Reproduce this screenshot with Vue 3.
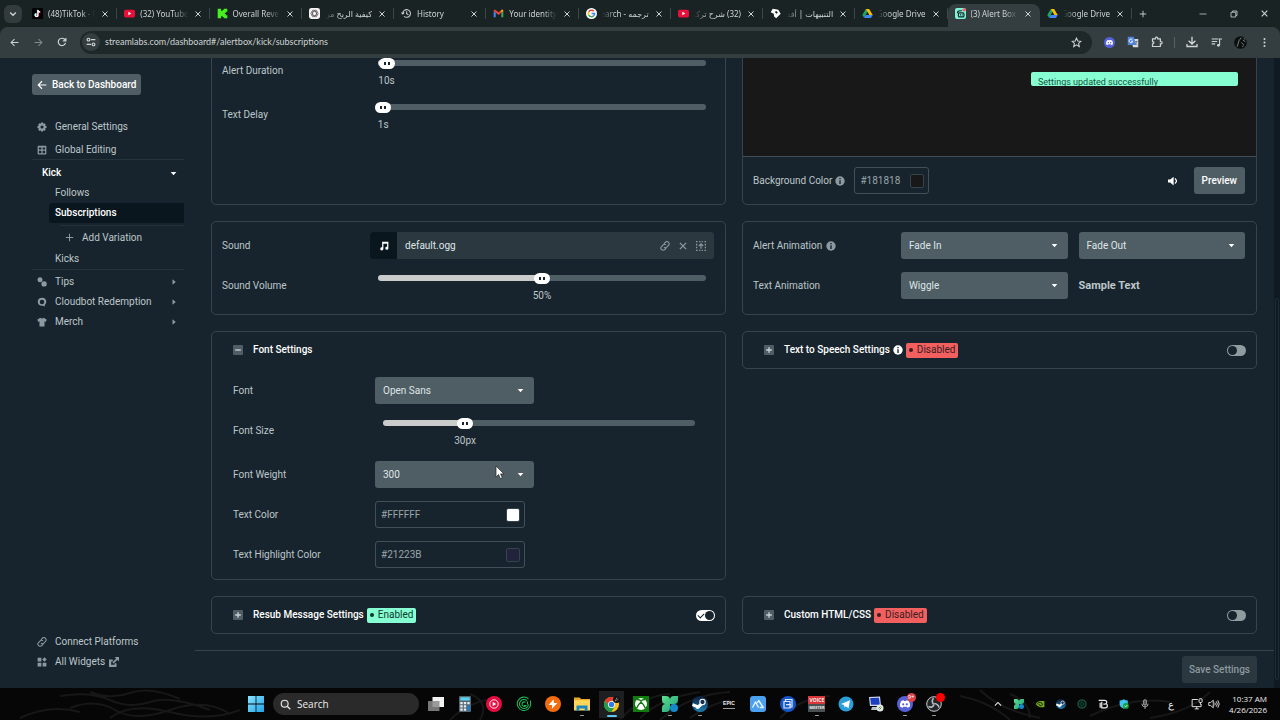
<script setup>
import { ref } from 'vue'

const tabs = [
  { title: '(48)TikTok - M', icon: 'tiktok' },
  { title: '(32) YouTube', icon: 'youtube' },
  { title: 'Overall Reve', icon: 'kick' },
  { title: 'كيفية الربح من', icon: 'chatgpt', rtl: true },
  { title: 'History', icon: 'history' },
  { title: 'Your identity', icon: 'gmail' },
  { title: 'ترجمه - Search', icon: 'google', rtl: true },
  { title: '(32) شرح تركي', icon: 'youtube', rtl: true },
  { title: 'التنبيهات | أفد', icon: 'cube', rtl: true },
  { title: 'Google Drive', icon: 'drive', rtl: true },
  { title: '(3) Alert Box', icon: 'alertbox', active: true },
  { title: 'Google Drive', icon: 'drive', rtl: true },
]

const duration = ref(26)
const delay = ref(16)
const volume = ref(500)
const fontSize = ref(263)
const fillTo = (v) => ({ '--at': v / 1000 })

const bgColor = ref('#181818')
const textColor = ref('#FFFFFF')
const highlight = ref('#21223B')

const apps = [
  { icon: 'taskview', name: 'Task View' },
  { icon: 'calc', name: 'Calculator' },
  { icon: 'ytmusic', name: 'YouTube Music' },
  { icon: 'spiral', name: 'Radar' },
  { icon: 'bolt', name: 'Bolt' },
  { icon: 'folder', name: 'File Explorer', open: true },
  { icon: 'chrome', name: 'Chrome', current: true },
  { icon: 'xbox', name: 'Xbox' },
  { icon: 'clover', name: 'Streamer', open: true },
  { icon: 'steam', name: 'Steam', open: true },
  { icon: 'epic', name: 'Epic Games' },
  { icon: 'peaks', name: 'Peaks' },
  { icon: 'bluecam', name: 'Capture' },
  { icon: 'voice', name: 'Voicemeeter', open: true },
  { icon: 'telegram', name: 'Telegram' },
  { icon: 'remote', name: 'Remote Desktop' },
  { icon: 'discord', name: 'Discord', open: true, badge: '9+' },
  { icon: 'obs', name: 'OBS Studio', open: true, dot: true },
]
const tray = ['chevup', 'clover', 'nvidia', 'steam', 'ring', 'tb', 'shield', 'mic']
</script>

<template>
  <div class="screen">
    <svg class="defs" width="0" height="0" aria-hidden="true">
      <defs>
        <linearGradient id="gWin" x1="0" y1="0" x2="1" y2="1"><stop offset="0" stop-color="#8ae4ff" /><stop offset="1" stop-color="#1fa4e8" /></linearGradient>
        <linearGradient id="gClover" x1="0" y1="0" x2="1" y2="1"><stop offset="0" stop-color="#5fe08a" /><stop offset="1" stop-color="#1c9c84" /></linearGradient>
        <linearGradient id="gSteam" x1="0" y1="0" x2="0" y2="1"><stop offset="0" stop-color="#0d1b38" /><stop offset="1" stop-color="#1d7fb5" /></linearGradient>
      </defs>
      <symbol id="tiktok" viewBox="0 0 16 16"><rect width="16" height="16" rx="2" fill="#000" /><path d="M8.6 3v7.4a1.9 1.9 0 1 1-1.9-1.9M8.6 3c.2 1.8 1.4 2.8 3.2 3" fill="none" stroke="#25f4ee" stroke-width="1.8" transform="translate(-.6 -.4)" /><path d="M8.6 3v7.4a1.9 1.9 0 1 1-1.9-1.9M8.6 3c.2 1.8 1.4 2.8 3.2 3" fill="none" stroke="#fe2c55" stroke-width="1.8" transform="translate(.5 .4)" /><path d="M8.6 3v7.4a1.9 1.9 0 1 1-1.9-1.9M8.6 3c.2 1.8 1.4 2.8 3.2 3" fill="none" stroke="#fff" stroke-width="1.7" /></symbol>
      <symbol id="youtube" viewBox="0 0 16 16"><rect y="2.4" width="16" height="11.4" rx="2.6" fill="#e8103a" /><path d="M6.3 5.6v5l4.4-2.5z" fill="#fff" /></symbol>
      <symbol id="kick" viewBox="0 0 16 16"><path d="M1 1h5v3.400h2V2.500h2V1h5v4.500h-1.800v1.500h-1.700v2h1.700v1.500H15V15h-5v-1.500H8v-2H6V15H1z" fill="#45f01c" /></symbol>
      <symbol id="chatgpt" viewBox="0 0 16 16"><rect width="16" height="16" rx="3.5" fill="#f4f4f4" /><g fill="none" stroke="#555" stroke-width="1"><ellipse cx="8" cy="8" rx="5.4" ry="2.9" /><ellipse cx="8" cy="8" rx="5.4" ry="2.9" transform="rotate(60 8 8)" /><ellipse cx="8" cy="8" rx="5.4" ry="2.9" transform="rotate(120 8 8)" /></g></symbol>
      <symbol id="history" viewBox="0 0 16 16"><path d="M2.6 8A5.6 5.6 0 1 1 4.3 12M.6 6.6l2 2 2-2M8.2 4.8v3.6l2.6 1.5" fill="none" stroke="#c6cdcd" stroke-width="1.5" /></symbol>
      <symbol id="gmail" viewBox="0 0 16 16"><path d="M1 13.5v-9l3 2.2v6.8z" fill="#4285f4" /><path d="M12 13.5V6.7l3-2.2v9z" fill="#34a853" /><path d="M1 4.5C1 2.6 2.8 2 4.200 3.100L8 6l3.800-2.900C13.200 2 15 2.600 15 4.500L8 10z" fill="#ea4335" /><path d="M12 3l1-.6q2-.2 2 2.100l-3 2.200z" fill="#fbbc04" /></symbol>
      <symbol id="google" viewBox="0 0 16 16"><circle cx="8" cy="8" r="8" fill="#fff" /><g fill="none" stroke-width="2.200"><path d="M11.300 4.800A4.600 4.600 0 0 0 4 5.700" stroke="#ea4335" /><path d="M4 5.700a4.600 4.600 0 0 0 0 4.600" stroke="#fbbc04" /><path d="M4 10.300a4.600 4.600 0 0 0 7 1.200" stroke="#34a853" /><path d="M11 11.500A4.600 4.600 0 0 0 12.600 8.100H8" stroke="#4285f4" /></g></symbol>
      <symbol id="cube" viewBox="0 0 16 16"><path d="M4 1l8 1.500 3.500 6L9 15l-3-2.500-.5-4L1 6z" fill="#fff" /><path d="M7 5.500l2.500-1 2 2.500-2.500 1.500z" fill="#1a2425" /></symbol>
      <symbol id="drive" viewBox="0 0 16 16"><path d="M5.600 1.500h4.800L5.400 10.200 3 14.200.4 10.300z" fill="#1fa463" /><path d="M5.600 1.500h4.800l5.200 8.800h-5z" fill="#fbbc04" /><path d="M5.200 10.300h10.400L13 14.500H3z" fill="#4285f4" /><path d="M8 6.200l2.300 4H5.700z" fill="#1a2425" /></symbol>
      <symbol id="alertbox" viewBox="0 0 16 16"><rect width="16" height="16" rx="3" fill="#80f5d2" /><path d="M3.500 7.500q0-3.500 3.500-3.500h3M5 8.500q0-1.500 1.500-1.500h5q1.500 0 1.500 1.500v3q0 1.500-1.500 1.500h-5Q5 13 5 11.500z" fill="none" stroke="#123" stroke-width="1.700" /><path d="M8 9v2M10.500 9v2" stroke="#123" stroke-width="1.300" /><circle cx="13.300" cy="2.700" r="2.500" fill="#f5576b" /></symbol>
      <symbol id="x" viewBox="0 0 16 16"><path d="M3 3l10 10M13 3L3 13" fill="none" stroke="currentColor" stroke-width="2" /></symbol>
      <symbol id="chev" viewBox="0 0 16 16"><path d="M3.500 5.500L8 10l4.500-4.500" fill="none" stroke="currentColor" stroke-width="2.200" /></symbol>
      <symbol id="chevup" viewBox="0 0 16 16"><path d="M3 10.500L8 5.500l5 5" fill="none" stroke="#e8e8e8" stroke-width="1.700" /></symbol>
      <symbol id="back" viewBox="0 0 16 16"><path d="M15 8H2M8 2L2 8l6 6" fill="none" stroke="currentColor" stroke-width="1.800" /></symbol>
      <symbol id="forward" viewBox="0 0 16 16"><path d="M1 8h13M8 2l6 6-6 6" fill="none" stroke="currentColor" stroke-width="1.800" /></symbol>
      <symbol id="reload" viewBox="0 0 16 16"><path d="M13.600 9.500A5.900 5.900 0 1 1 12.400 4L14 6M14.200 1.500v4.800H9.400" fill="none" stroke="currentColor" stroke-width="1.900" /></symbol>
      <symbol id="tune" viewBox="0 0 16 16"><g fill="none" stroke="currentColor" stroke-width="1.900"><circle cx="4" cy="4.200" r="2.200" /><path d="M8 4.200h7M1 11.800h7" /><circle cx="12" cy="11.800" r="2.200" /></g></symbol>
      <symbol id="star" viewBox="0 0 16 16"><path d="M8 1.600l1.900 4.300 4.600.4-3.500 3.100 1.100 4.600L8 11.500 3.900 14 5 9.400 1.500 6.300l4.600-.4z" fill="none" stroke="currentColor" stroke-width="1.500" /></symbol>
      <symbol id="discord" viewBox="0 0 16 16"><circle cx="8" cy="8" r="8" fill="#5661d8" /><path d="M4.200 5.100Q5.500 4.200 6.600 4.200l.4.700h2l.4-.700q1.100 0 2.400.9 1.400 2.400 1.200 5.400-1.200 1.100-2.700 1.200l-.6-1H6.300l-.6 1Q4.200 11.600 3 10.500q-.2-3 1.200-5.400z" fill="#fff" /><circle cx="6.200" cy="8.300" r="1.100" fill="#5661d8" /><circle cx="9.800" cy="8.300" r="1.100" fill="#5661d8" /></symbol>
      <symbol id="translate" viewBox="0 0 16 16"><path d="M6 4h9v11H8z" fill="#d8dcdc" /><path d="M1 1h8l3 11H1z" fill="#4f86dc" /><path d="M7.300 5.200A2.400 2.400 0 1 0 7.600 7H5.600" fill="none" stroke="#fff" stroke-width="1.200" /><path d="M10.500 7.500h4M12.500 6.500v1q0 2.500-2 4M11 9q1 2 3 3" fill="none" stroke="#667" /></symbol>
      <symbol id="puzzle" viewBox="0 0 16 16"><path d="M2 3.800h3.800q-.3-2.300 1.600-2.300T9 3.800h3.500v3.600q2.300-.3 2.300 1.500t-2.300 1.500V14H2v-3.600q1.800 0 1.800-1.500T2 7.400z" fill="none" stroke="currentColor" stroke-width="1.600" /></symbol>
      <symbol id="download" viewBox="0 0 16 16"><path d="M8 1v9.500M3.500 6.300L8 10.800l4.500-4.500M1.300 10.500V14h13.400v-3.500" fill="none" stroke="currentColor" stroke-width="1.800" /></symbol>
      <symbol id="queue" viewBox="0 0 16 16"><path d="M1 3h10M1 6.500h8M1 10h5M12.500 12V3H16" fill="none" stroke="currentColor" stroke-width="1.600" /><circle cx="10.800" cy="12" r="2" fill="currentColor" /></symbol>
      <symbol id="avatar" viewBox="0 0 16 16"><circle cx="8" cy="8" r="7.800" fill="#0c1010" /><path d="M4 13l2-7 3-4M12 3l2 1M11 5l3 2M9 8l3 3M10 13l2-1" fill="none" stroke="#8e9695" stroke-width="1" /></symbol>
      <symbol id="dots" viewBox="0 0 16 16"><circle cx="8" cy="2.800" r="1.500" fill="currentColor" /><circle cx="8" cy="8" r="1.500" fill="currentColor" /><circle cx="8" cy="13.200" r="1.500" fill="currentColor" /></symbol>
      <symbol id="plus" viewBox="0 0 16 16"><path d="M8 1.500v13M1.500 8h13" fill="none" stroke="currentColor" stroke-width="1.800" /></symbol>
      <symbol id="minimise" viewBox="0 0 16 16"><path d="M1 8h14" stroke="currentColor" stroke-width="1.500" /></symbol>
      <symbol id="restore" viewBox="0 0 16 16"><path d="M2 4.500h9.500V14H2zM5 4V2h9v9h-2" fill="none" stroke="currentColor" stroke-width="1.600" stroke-linejoin="round" /></symbol>
      <symbol id="gear" viewBox="0 0 16 16"><path d="M6.500.8h3l.5 2.100 1.800-1.100 2.100 2.100L12.900 5.800l2.300.7v3l-2.300.6 1 2-2.100 2.100-1.900-1-.4 2h-3l-.6-2-2 1-2-2.100 1-2-2.100-.6v-3l2.100-.6-1-2L4 1.800l1.900 1zM8 5.500a2.500 2.500 0 1 0 0 5 2.500 2.500 0 0 0 0-5z" fill="currentColor" fill-rule="evenodd" /></symbol>
      <symbol id="window" viewBox="0 0 16 16"><path d="M2.500 1h11Q15 1 15 2.500v11q0 1.500-1.500 1.500h-11Q1 15 1 13.500v-11Q1 1 2.500 1zM3 4v3h4V4zM9 4v3h4V4zM3 9v4h4V9zM9 9v4h4V9z" fill="currentColor" fill-rule="evenodd" /></symbol>
      <symbol id="caret" viewBox="0 0 16 16"><path d="M3 5.500h10L8 11z" fill="currentColor" /></symbol>
      <symbol id="tri" viewBox="0 0 16 16"><path d="M5 2.500v11L11.500 8z" fill="currentColor" /></symbol>
      <symbol id="coins" viewBox="0 0 16 16"><circle cx="4.800" cy="4.500" r="4" fill="currentColor" /><circle cx="11.300" cy="11" r="4.300" fill="currentColor" /></symbol>
      <symbol id="bot" viewBox="0 0 16 16"><path d="M8 1.200c4 0 6.800 2.500 6.800 6.200 0 2.200-1 3.800-2.300 4.900v2.900l-3-1.200c-5 .600-8.300-2.300-8.300-6.600 0-3.700 2.800-6.200 6.800-6.200zM8 4.300a3.600 3.600 0 1 0 0 7.200 3.600 3.600 0 0 0 0-7.200z" fill="currentColor" fill-rule="evenodd" /></symbol>
      <symbol id="shirt" viewBox="0 0 16 16"><path d="M5 1q3 2.400 6 0l4.600 3.300-1.800 3.500-1.800-.9V15H4V6.900l-1.800.9L.4 4.300z" fill="currentColor" /></symbol>
      <symbol id="link" viewBox="0 0 16 16"><path d="M6.200 4.400l2.300-2.300a3.400 3.400 0 0 1 5 5l-2.600 2.600a3.200 3.200 0 0 1-4.500 0M9.800 11.600l-2.300 2.300a3.400 3.400 0 0 1-5-5l2.600-2.600a3.200 3.200 0 0 1 4.500 0" fill="none" stroke="currentColor" stroke-width="1.700" /></symbol>
      <symbol id="widgets" viewBox="0 0 16 16"><path d="M1 1h6v6H1zM1 9h6v6H1zM9 9h6v6H9zM12 .5L15.500 4 12 7.500 8.500 4z" fill="currentColor" /></symbol>
      <symbol id="external" viewBox="0 0 16 16"><path d="M9 0h7v7l-2.500-2.500L7.500 10.500 5.500 8.500l6-6zM0 4h6v3H3.500v5.500H9V10h3v6H0z" fill="currentColor" /></symbol>
      <symbol id="music" viewBox="0 0 16 16"><path d="M5 1h10v10.500a2.500 2.500 0 1 1-2-2.400V4.500H7v8a2.500 2.500 0 1 1-2-2.400z" fill="currentColor" /></symbol>
      <symbol id="picker" viewBox="0 0 16 16"><path d="M0 1h2.500M5 1h2M9 1h2M13.500 1H16M0 15h2.500M5 15h2M9 15h2M13.500 15H16M1 4.500v2.500M1 9v2.500M15 4.500v2.500M15 9v2.500" fill="none" stroke="currentColor" stroke-width="2" /><path d="M8 12.500V4M4.500 8L8 4.500 11.500 8" fill="none" stroke="currentColor" stroke-width="1.800" /></symbol>
      <symbol id="info" viewBox="0 0 16 16"><circle cx="8" cy="8" r="7.500" fill="currentColor" /><path d="M8 3.200v2M8 6.800v6" stroke="#17242d" stroke-width="2.200" /></symbol>
      <symbol id="speaker" viewBox="0 0 16 16"><path d="M0 5.500h3.500L9 1v14L3.500 10.500H0z" fill="currentColor" /><path d="M11 4q5 4 0 8" fill="none" stroke="currentColor" stroke-width="2" /></symbol>
      <symbol id="plusbox" viewBox="0 0 16 16"><rect width="16" height="16" rx="1.500" fill="#4f5e65" /><path d="M8 3.500v9M3.500 8h9" stroke="#c8d0d3" stroke-width="2.200" /></symbol>
      <symbol id="minusbox" viewBox="0 0 16 16"><rect width="16" height="16" rx="1.500" fill="#4f5e65" /><path d="M3.500 8h9" stroke="#c8d0d3" stroke-width="2.200" /></symbol>
      <symbol id="windows" viewBox="0 0 16 16"><path d="M0 0h7.600v7.600H0zM8.400 0H16v7.600H8.400zM0 8.400h7.600V16H0zM8.400 8.400H16V16H8.400z" fill="url(#gWin)" /></symbol>
      <symbol id="search" viewBox="0 0 16 16"><circle cx="6.800" cy="6.800" r="5" fill="#3a3a3a" stroke="#e6e6e6" stroke-width="1.700" /><path d="M10.500 10.500L15 15" stroke="#e6e6e6" stroke-width="1.900" /></symbol>
      <symbol id="taskview" viewBox="0 0 16 16"><rect x="4.500" y="1" width="11.500" height="10" fill="#f1f1f1" /><rect y="5" width="11.500" height="10" fill="#8b8b8b" opacity=".85" /></symbol>
      <symbol id="calc" viewBox="0 0 16 16"><rect x="2" width="12" height="16" rx="1" fill="#55646e" /><rect x="3.300" y="1.300" width="9.400" height="3.200" fill="#59d4ee" /><path d="M3.300 6h2.400v2.200H3.300zM6.800 6h2.400v2.200H6.800zM10.300 6h2.400v2.200h-2.400zM3.300 9.300h2.400v2.200H3.300zM6.800 9.300h2.400v2.200H6.800zM3.300 12.500h2.400v2.200H3.300zM6.800 12.500h2.400v2.200H6.800z" fill="#e5edf0" /><path d="M10.300 9.300h2.400v5.400h-2.400z" fill="#1a7fd0" /></symbol>
      <symbol id="ytmusic" viewBox="0 0 16 16"><circle cx="8" cy="8" r="8" fill="#e60c3f" /><circle cx="8" cy="8" r="4.200" fill="none" stroke="#fff" stroke-width=".9" /><path d="M6.700 5.800v4.400L10.300 8z" fill="#fff" /></symbol>
      <symbol id="spiral" viewBox="0 0 16 16"><g fill="none" stroke="#25b955" stroke-width="1.100"><path d="M12.500 2.800A6.700 6.700 0 1 0 14.700 8M14.300 4.500l.4 3.500M11 4.600A4.500 4.500 0 1 0 12.500 8.500M9.500 6.300A2.200 2.200 0 1 0 10 9.500H8M11.500 5.500v3" /></g></symbol>
      <symbol id="bolt" viewBox="0 0 16 16"><circle cx="8" cy="8" r="8" fill="#f36d10" /><path d="M8.700 3.200L3.600 9h3.600l-.3 3.700L12.400 7H8.800z" fill="#fff" /></symbol>
      <symbol id="folder" viewBox="0 0 16 16"><path d="M0 1.500h5.500L7.200 3H16v11.500H0z" fill="#e7a82b" /><path d="M0 4.200h16v10H0z" fill="#ffd65a" /><path d="M2.500 9.500h11V15h-2.800v-2.400H5.300V15H2.500z" fill="#1787c4" /></symbol>
      <symbol id="chrome" viewBox="0 0 16 16"><circle cx="7.500" cy="8.500" r="7.500" fill="#fbc116" /><path d="M1 4.750a7.500 7.500 0 0 1 13 0H7.500L5 10z" fill="#e33b2e" /><path d="M1 4.750a7.500 7.500 0 0 0 6.500 11.250l3.200-5.600L5 10z" fill="#229a4b" /><circle cx="7.500" cy="8.500" r="3.500" fill="#fff" /><circle cx="7.500" cy="8.500" r="2.700" fill="#2b7de9" /><circle cx="12.500" cy="3.500" r="3.500" fill="#111" /><path d="M11 5.500l2-4M12.500 4.500l2-1.500" stroke="#999" stroke-width=".8" /></symbol>
      <symbol id="xbox" viewBox="0 0 16 16"><rect width="16" height="16" fill="#107c10" /><circle cx="8" cy="8" r="6" fill="#fff" /><path d="M3.800 3.700Q6 3 8 5q2-2 4.200-1.300M3.500 12.400Q5 8.500 8 6q3 2.500 4.500 6.400" fill="none" stroke="#107c10" stroke-width="1.500" /></symbol>
      <symbol id="clover" viewBox="0 0 16 16"><path d="M0 0h4q4 0 4 4 0-4 4-4h4v4q0 4-4 4 1 0 1 1l-5-1v4q0 4-4 4H0v-4q0-4 4-4-4 0-4-4z" fill="url(#gClover)" /><circle cx="12" cy="12" r="4" fill="#1788c8" /></symbol>
      <symbol id="nvidia" viewBox="0 0 16 16"><path d="M1 8q3-5 8-5h6v10H8Q4 12.500 1 8z" fill="#76a91b" /><path d="M3.500 8q2-3 5-2.500T12 9q-2 2.500-4 1.500T6.500 8" fill="none" stroke="#10190a" stroke-width="1.500" /></symbol>
      <symbol id="steam" viewBox="0 0 16 16"><circle cx="8" cy="8" r="8" fill="url(#gSteam)" /><path d="M.5 8.500l5 2.200M6 11l3.500-3" stroke="#fff" stroke-width="3" /><circle cx="10.500" cy="6" r="2.700" fill="#1b2d4c" stroke="#fff" stroke-width="1.100" /><circle cx="5.700" cy="11" r="2" fill="#fff" /></symbol>
      <symbol id="peaks" viewBox="0 0 16 16"><rect width="16" height="16" rx="3" fill="#4ba0ef" /><path d="M2.500 11.500L5.500 6l3 5.500M7.200 7l1.500-2.500 4.500 7h-3.500" fill="none" stroke="#e8f4ff" stroke-width="1.400" stroke-linejoin="round" /></symbol>
      <symbol id="bluecam" viewBox="0 0 16 16"><circle cx="8" cy="8" r="8" fill="#1557c6" /><path d="M5.500 5V3.500H12V11h-1.500M4 5.500h6v6.500H4zM6 8.700h5" fill="none" stroke="#dceaff" stroke-width="1.200" /></symbol>
      <symbol id="telegram" viewBox="0 0 16 16"><circle cx="8" cy="8" r="7.500" fill="#2ba0d8" /><path d="M3 8l9-3.700-1.500 8-2.700-2L6.500 11.500 6 9z" fill="#fff" /></symbol>
      <symbol id="remote" viewBox="0 0 16 16"><path d="M1 1l11-.5 1 9.500H2z" fill="#d5dcec" /><path d="M2.200 2l8.800-.300.800 7H3z" fill="#1c3fc0" /><path d="M4 11h6l1 3H3z" fill="#b9c0c8" /><circle cx="12" cy="12" r="3.500" fill="#e7e9e7" /><path d="M10.500 12.500l2-2M11.500 13.500l2-2" stroke="#4b9a3f" /></symbol>
      <symbol id="obs" viewBox="0 0 16 16"><circle cx="8" cy="8" r="7.300" fill="#23262a" stroke="#c9ced1" stroke-width="1" /><path d="M7.500 8.200Q5 5 7.500 2.200M8.200 7.500q4 .500 4.800 4M8 8.500q-1.500 4-5.500 2" fill="none" stroke="#b9bec1" stroke-width="1.600" /></symbol>
      <symbol id="ring" viewBox="0 0 16 16"><circle cx="8" cy="8" r="6.500" fill="#0a1d17" stroke="#1d6b4d" stroke-width="1.600" /><circle cx="8" cy="8" r="3" fill="none" stroke="#15503b" /></symbol>
      <symbol id="tb" viewBox="0 0 16 16"><path d="M1 2h9.500q3.500 0 3.500 3 0 2-1.500 2.600 2.500.6 2.500 3 0 3.400-4 3.400H6V4.500M8.500 8H12M3.500 6v8" fill="none" stroke="#e9e9e9" stroke-width="2" /></symbol>
      <symbol id="shield" viewBox="0 0 16 16"><path d="M1 2.500Q5 2.500 7.500.5 10 2.500 14 2.500V8q0 5-6.500 7.500Q1 13 1 8z" fill="#3dc5f1" /><circle cx="11" cy="11" r="4.700" fill="#169c3c" /><path d="M8.800 11l1.700 1.600 3-3" fill="none" stroke="#fff" stroke-width="1.400" /></symbol>
      <symbol id="mic" viewBox="0 0 16 16"><rect x="5.500" y="1" width="5" height="9" rx="2.500" fill="#53585a" stroke="#d8d8d8" /><path d="M3 7.500q0 5 5 5t5-5M8 12.500V16" fill="none" stroke="#d8d8d8" stroke-width="1.200" /></symbol>
      <symbol id="monitor" viewBox="0 0 16 16"><path d="M9 2H1.500v9.500h12V8M5 14.500h5.500M7.700 11.500v3M12.500 6v3" fill="none" stroke="#e4e4e4" stroke-width="1.300" /><rect x="10.800" y="1" width="4" height="5" rx="1" fill="none" stroke="#e4e4e4" stroke-width="1.300" /></symbol>
      <symbol id="sound" viewBox="0 0 16 16"><path d="M1 6h2.500L7 3v10l-3.500-3H1zM9 6q1.500 2 0 4M11 4.500q3 3.500 0 7M13 3q4 5 0 10" fill="none" stroke="#e4e4e4" stroke-width="1.200" /></symbol>
    </svg>

    <header class="chrome">
      <div class="strip">
        <button class="tabmenu" aria-label="Search tabs"><svg class="s10"><use href="#chev" /></svg></button>
        <div class="tabs">
          <div v-for="(t, i) in tabs" :key="i" class="tab" :class="{ active: t.active }">
            <svg class="s11"><use :href="'#' + t.icon" /></svg>
            <span class="title" :class="{ rtl: t.rtl }">{{ t.title }}</span>
            <button aria-label="Close tab"><svg class="s8"><use href="#x" /></svg></button>
          </div>
        </div>
        <button class="newtab" aria-label="New tab"><svg class="s8"><use href="#plus" /></svg></button>
        <div class="winctl">
          <button aria-label="Minimise"><svg class="s8"><use href="#minimise" /></svg></button>
          <button aria-label="Restore"><svg class="s8"><use href="#restore" /></svg></button>
          <button aria-label="Close"><svg class="s9"><use href="#x" /></svg></button>
        </div>
      </div>
      <div class="toolbar">
        <div class="nav">
          <button aria-label="Back"><svg class="s9"><use href="#back" /></svg></button>
          <button class="off" aria-label="Forward"><svg class="s9"><use href="#forward" /></svg></button>
          <button aria-label="Reload"><svg class="s10"><use href="#reload" /></svg></button>
        </div>
        <div class="omni">
          <button class="site" aria-label="Site information"><svg class="s10"><use href="#tune" /></svg></button>
          <input type="text" aria-label="Address" value="streamlabs.com/dashboard#/alertbox/kick/subscriptions" />
          <button aria-label="Bookmark"><svg class="s11"><use href="#star" /></svg></button>
        </div>
        <div class="exts">
          <button aria-label="Discord"><svg class="s11"><use href="#discord" /></svg></button>
          <button aria-label="Translate"><svg class="s12"><use href="#translate" /></svg></button>
          <button aria-label="Extensions"><svg class="s12"><use href="#puzzle" /></svg></button>
          <i></i>
          <button aria-label="Downloads"><svg class="s12"><use href="#download" /></svg></button>
          <button aria-label="Media"><svg class="s11"><use href="#queue" /></svg></button>
          <button aria-label="Profile"><svg class="s13"><use href="#avatar" /></svg></button>
          <button aria-label="Menu"><svg class="s11"><use href="#dots" /></svg></button>
        </div>
      </div>
    </header>

    <div class="page">
      <aside class="side">
        <a class="backbtn" href="#"><svg class="s10"><use href="#back" /></svg>Back to Dashboard</a>
        <nav>
          <a class="item tall" href="#"><svg class="s10"><use href="#gear" /></svg>General Settings</a>
          <a class="item tall" href="#"><svg class="s10"><use href="#window" /></svg>Global Editing</a>
          <div class="group">
            <a class="item kick" href="#">Kick<svg class="s9 end"><use href="#caret" /></svg></a>
            <a class="item sub" href="#">Follows</a>
            <a class="item sub on" href="#">Subscriptions</a>
            <a class="item add" href="#"><svg class="s9"><use href="#plus" /></svg>Add Variation</a>
            <a class="item sub" href="#">Kicks</a>
          </div>
          <a class="item" href="#"><svg class="s10"><use href="#coins" /></svg>Tips<svg class="s8 end"><use href="#tri" /></svg></a>
          <a class="item" href="#"><svg class="s10"><use href="#bot" /></svg>Cloudbot Redemption<svg class="s8 end"><use href="#tri" /></svg></a>
          <a class="item" href="#"><svg class="s10"><use href="#shirt" /></svg>Merch<svg class="s8 end"><use href="#tri" /></svg></a>
        </nav>
        <nav class="bottom">
          <a class="item" href="#"><svg class="s10"><use href="#link" /></svg>Connect Platforms</a>
          <a class="item" href="#"><svg class="s10"><use href="#widgets" /></svg>All Widgets<svg class="s10 ext"><use href="#external" /></svg></a>
        </nav>
      </aside>

      <main>
        <div class="scroll">
          <div class="cards">
            <section class="card first">
              <div class="row slide">
                <label for="dur">Alert Duration</label>
                <div class="slider" :style="fillTo(duration)">
                  <span class="rail"></span><input id="dur" v-model="duration" type="range" max="1000" />
                  <output>10s</output>
                </div>
              </div>
              <div class="row slide">
                <label for="delay">Text Delay</label>
                <div class="slider" :style="fillTo(delay)">
                  <span class="rail"></span><input id="delay" v-model="delay" type="range" max="1000" />
                  <output>1s</output>
                </div>
              </div>
            </section>

            <section class="card first preview">
              <div class="stage"></div>
              <div class="bar">
                <label for="bg">Background Color</label>
                <svg class="s10 dim"><use href="#info" /></svg>
                <div class="color small">
                  <input id="bg" v-model="bgColor" type="text" />
                  <input v-model="bgColor" type="color" aria-label="Pick background color" />
                </div>
                <button class="mute" aria-label="Sound"><svg class="s10"><use href="#speaker" /></svg></button>
                <button class="btn">Preview</button>
              </div>
            </section>

            <section class="card">
              <div class="row">
                <span>Sound</span>
                <div class="file">
                  <span class="note"><svg class="s10"><use href="#music" /></svg></span>
                  <span class="name">default.ogg</span>
                  <button aria-label="Link"><svg class="s10"><use href="#link" /></svg></button>
                  <button aria-label="Remove"><svg class="s10"><use href="#x" /></svg></button>
                  <button aria-label="Choose media"><svg class="s10"><use href="#picker" /></svg></button>
                </div>
              </div>
              <div class="row slide">
                <label for="vol">Sound Volume</label>
                <div class="slider" :style="fillTo(volume)">
                  <span class="rail"></span><input id="vol" v-model="volume" type="range" max="1000" />
                  <output>50%</output>
                </div>
              </div>
            </section>

            <section class="card stretch">
              <div class="row three">
                <label for="anim">Alert Animation<svg class="s10 dim"><use href="#info" /></svg></label>
                <div class="select"><select id="anim"><option>Fade In</option></select><svg class="s9"><use href="#caret" /></svg></div>
                <div class="select"><select aria-label="Exit animation"><option>Fade Out</option></select><svg class="s9"><use href="#caret" /></svg></div>
              </div>
              <div class="row three">
                <label for="tanim">Text Animation</label>
                <div class="select"><select id="tanim"><option>Wiggle</option></select><svg class="s9"><use href="#caret" /></svg></div>
                <strong class="sample">Sample Text</strong>
              </div>
            </section>

            <section class="card fold">
              <h2><button aria-label="Collapse"><svg class="s10"><use href="#minusbox" /></svg></button>Font Settings</h2>
              <div class="fields">
                <div class="row">
                  <label for="font">Font</label>
                  <div class="select narrow"><select id="font"><option>Open Sans</option></select><svg class="s9"><use href="#caret" /></svg></div>
                </div>
                <div class="row slide">
                  <label for="size">Font Size</label>
                  <div class="slider" :style="fillTo(fontSize)">
                    <span class="rail"></span><input id="size" v-model="fontSize" type="range" max="1000" />
                    <output>30px</output>
                  </div>
                </div>
                <div class="row">
                  <label for="weight">Font Weight</label>
                  <div class="select narrow"><select id="weight"><option>300</option></select><svg class="s9"><use href="#caret" /></svg></div>
                </div>
                <div class="row">
                  <label for="tc">Text Color</label>
                  <div class="color"><input id="tc" v-model="textColor" type="text" /><input v-model="textColor" type="color" aria-label="Pick text color" /></div>
                </div>
                <div class="row">
                  <label for="hc">Text Highlight Color</label>
                  <div class="color"><input id="hc" v-model="highlight" type="text" /><input v-model="highlight" type="color" aria-label="Pick highlight color" /></div>
                </div>
              </div>
            </section>

            <section class="card fold">
              <h2>
                <button aria-label="Expand"><svg class="s10"><use href="#plusbox" /></svg></button>Text to Speech Settings
                <svg class="s10 info"><use href="#info" /></svg><span class="badge bad">Disabled</span>
                <input type="checkbox" aria-label="Text to Speech" />
              </h2>
            </section>

            <section class="card fold">
              <h2>
                <button aria-label="Expand"><svg class="s10"><use href="#plusbox" /></svg></button>Resub Message Settings
                <span class="badge">Enabled</span>
                <input type="checkbox" aria-label="Resub Message" checked />
              </h2>
            </section>

            <section class="card fold">
              <h2>
                <button aria-label="Expand"><svg class="s10"><use href="#plusbox" /></svg></button>Custom HTML/CSS
                <span class="badge bad">Disabled</span>
                <input type="checkbox" aria-label="Custom HTML/CSS" />
              </h2>
            </section>
          </div>
          <div class="toast">Settings updated successfully</div>
        </div>
        <footer><button class="btn save">Save Settings</button></footer>
      </main>
      <div class="vbar"><span></span></div>
    </div>

    <div class="taskbar">
      <svg class="waves" viewBox="0 0 1280 32" preserveAspectRatio="none" aria-hidden="true">
        <g fill="none" stroke="#888" stroke-width="2" opacity=".13">
          <path d="M60 8q30-5 50 4t40 2 60 8M70 20q25-10 45 2t55 0 60 4M20 30q30-14 60-6M90 4q20 8 40 1t50 6M110 30q20-16 60-6t70-2" />
          <path d="M450 32q20-20 50-22M470 6q20 8 10 26M620 32q20-24 50-26M640 30q20-20 60-26M660 32q30-26 70-28M690 30q20-14 40-18M780 30q20-20 50-22" />
          <path d="M960 8q30 6 50 24M980 2q20 20 60 28M1010 6q20 8 20 24M1090 28q40-20 80-14M1150 30q40-6 60-26" />
        </g>
      </svg>
      <button class="start" aria-label="Start"><svg class="s16"><use href="#windows" /></svg></button>
      <button class="find"><svg class="s11"><use href="#search" /></svg>Search</button>
      <div class="apps">
        <button v-for="a in apps" :key="a.name" :class="{ open: a.open, current: a.current }" :aria-label="a.name">
          <span v-if="a.icon === 'voice'" class="voice"><b>VOICE</b><b>MEETER</b></span>
          <span v-else-if="a.icon === 'epic'" class="epic">EPIC</span>
          <svg v-else class="s16"><use :href="'#' + a.icon" /></svg>
          <em v-if="a.badge">{{ a.badge }}</em>
          <em v-if="a.dot" class="dot"></em>
        </button>
      </div>
      <div class="tray">
        <svg v-for="t in tray" :key="t" class="s10"><use :href="'#' + t" /></svg>
      </div>
      <span class="lang">ع</span>
      <svg class="s12"><use href="#monitor" /></svg>
      <svg class="s12"><use href="#sound" /></svg>
      <div class="clock"><span>10:37 AM</span><span>4/26/2026</span></div>
    </div>

    <svg class="pointer" viewBox="0 0 10 15"><path d="M1 1v11l2.600-2.400 1.700 4 2-.900-1.700-3.800H9z" fill="#fff" stroke="#222" stroke-width=".7" /></svg>
  </div>
</template>

<style>
html, body { background: #000; overflow: hidden; }
</style>

<style scoped>
.screen { position: relative; display: flex; flex-direction: column; height: 100vh; font-family: Roboto, "Liberation Sans", sans-serif; font-size: 10px; line-height: 12px; color: #bdc6ca; }
.screen *, .screen *::before { box-sizing: border-box; }
.defs { position: absolute; }
svg { flex: none; display: block; }
.s8 { width: 8px; height: 8px; }
.s9 { width: 9px; height: 9px; }
.s10 { width: 10px; height: 10px; }
.s11 { width: 11px; height: 11px; }
.s12 { width: 12px; height: 12px; }
.s13 { width: 13px; height: 13px; }
.s16 { width: 16px; height: 16px; }
button { border: 0; padding: 0; margin: 0; background: none; color: inherit; font: inherit; display: flex; align-items: center; justify-content: center; flex: none; }
a { color: inherit; text-decoration: none; }
input, select { font: inherit; color: inherit; margin: 0; }

/* browser frame */
.chrome { background: #192324; font-family: "Noto Sans", "Open Sans", "DejaVu Sans", sans-serif; color: #cdd4d4; flex: none; }
.strip { display: flex; height: 27px; align-items: stretch; padding-left: 4px; }
.tabmenu { width: 18px; height: 18px; border-radius: 6px; background: #323c3e; align-self: center; margin-right: 3px; }
.tabs { flex: 1; display: flex; min-width: 0; }
.tab { flex: 1 1 0; min-width: 0; display: flex; align-items: center; padding: 0 8px 0 7px; position: relative; font-size: 8px; }
.tab::before { content: ""; position: absolute; right: 0; top: 8px; height: 11px; width: 1px; background: #3a4648; }
.tab.active { background: #343e40; border-radius: 8px 8px 0 0; margin-top: 4px; padding-bottom: 4px; }
.tab.active::before { display: none; }
.title { flex: 1; min-width: 0; margin: 0 6px 0 5px; overflow: hidden; white-space: nowrap; -webkit-mask: linear-gradient(to left, transparent, #000 14px); mask: linear-gradient(to left, transparent, #000 14px); }
.title.rtl { direction: rtl; -webkit-mask: linear-gradient(to right, transparent, #000 14px); mask: linear-gradient(to right, transparent, #000 14px); }
.newtab { width: 22px; }
.winctl { display: flex; padding-left: 33px; }
.winctl button { width: 31px; }
.toolbar { display: flex; align-items: center; height: 31px; background: #343e40; border-radius: 8px 8px 0 0; padding-bottom: 1px; }
.nav { display: flex; padding: 0 5px 0 2px; }
.nav button { width: 24px; }
.off { opacity: .5; }
.omni { flex: 1; display: flex; align-items: center; height: 23px; border-radius: 12px; background: #1e2829; padding: 0 10px 0 2px; margin-left: 1px; }
.site { width: 18px; height: 18px; border-radius: 50%; background: #343e40; }
.omni input { flex: 1; border: 0; background: none; outline: 0; padding: 0 5px; font-family: Lato, "Open Sans", sans-serif; font-size: 9px; }
.exts { display: flex; align-items: center; padding: 0 4px 0 5px; }
.exts button { width: 24px; }
.exts i { width: 1px; height: 11px; background: #566062; margin: 0 5px; }

/* page */
.page { flex: 1; min-height: 0; display: flex; background: #17242d; overflow: hidden; }
.side { width: 195px; flex: none; padding: 16px 11px 16px 32px; display: flex; flex-direction: column; }
.backbtn { align-self: flex-start; display: flex; align-items: center; gap: 5px; height: 21px; padding: 0 5px; border-radius: 3px; background: #4f5e65; color: #fff; font-weight: 500; margin-bottom: 20px; }
.item { display: flex; align-items: center; height: 20px; gap: 8px; padding-left: 5px; }
.item > svg { color: #8d999f; }
.item.tall { height: 23px; }
.item .end { margin-left: auto; margin-right: 6px; }
.group { border: solid #25333b; border-width: 1px 0; padding: 3px 0 0; margin: -2px 0 2px; }
.kick { color: #fff; font-weight: 500; padding-left: 10px; }
.item.kick > svg { color: #fff; }
.sub { padding-left: 6px; margin-left: 17px; border-radius: 3px 0 0 3px; }
.on { background: #09161d; color: #fff; font-weight: 500; }
.add { margin: 2px 0 0 28px; border-top: 1px solid #22303a; height: 24px; }
.bottom { margin-top: auto; }
.item .ext { margin-left: -4px; }

main { flex: 1; min-width: 0; display: flex; flex-direction: column; }
.scroll { flex: 1; min-height: 0; position: relative; overflow: hidden; padding: 0 17px 0 16px; }
.cards { display: grid; grid-template-columns: 1fr 1fr; gap: 16px; align-items: start; margin-top: -20px; }
.card { border: 1px solid #36454d; border-radius: 5px; padding: 10px 11px 6px 10px; min-height: 38px; }
.first { min-height: 167px; align-self: stretch; }
.stretch { align-self: stretch; }
.row { display: grid; grid-template-columns: 148px 1fr; align-items: center; min-height: 27px; margin-bottom: 13px; }
.row:last-child { margin-bottom: 0; }
.row:has(+ .slide) { margin-bottom: 5px; }
.row.slide { min-height: 44px; margin-bottom: 8px; }
.first .row.slide, .row.slide:last-child { margin-bottom: 0; }
.three { grid-template-columns: 137px 1fr 1fr; column-gap: 11px; }
.row label, .row > span { display: flex; align-items: center; gap: 4px; }
.dim { color: #8d999f; }

.slider { align-self: start; display: grid; grid-template-rows: 12px 12px; row-gap: 6px; padding-top: 8px; }
.rail { grid-area: 1 / 1; align-self: center; height: 6px; margin: 0 8px; border-radius: 3px; background: linear-gradient(to right, #c9cccb calc(var(--at) * 100%), #4f5e65 calc(var(--at) * 100%)); }
.slider input { grid-area: 1 / 1; width: 100%; height: 12px; appearance: none; background: none; }
.slider input::-webkit-slider-thumb { appearance: none; width: 16px; height: 11px; border-radius: 6px; background: linear-gradient(#17242d, #17242d) 5px 50% / 2px 3px no-repeat, linear-gradient(#17242d, #17242d) 9px 50% / 2px 3px no-repeat, #fff; }
.slider output { width: 40px; text-align: center; margin-left: calc((100% - 16px) * var(--at) - 12px); }

.select { display: grid; align-items: center; }
.select.narrow { width: 159px; }
.select select { grid-area: 1 / 1; appearance: none; width: 100%; height: 27px; border: 0; border-radius: 3px; background: #4f5e65; padding: 0 8px; color: #dfe5e7; }
.select svg { grid-area: 1 / 1; justify-self: end; margin-right: 9px; color: #fff; pointer-events: none; }
.sample { font-size: 11px; font-weight: 700; }
.color { display: flex; align-items: center; width: 150px; height: 27px; border: 1px solid #415058; border-radius: 3px; padding: 0 4px 0 5px; color: #9aa5aa; }
.color.small { width: 75px; }
.color input[type="text"] { flex: 1; min-width: 0; border: 0; background: none; padding: 0; outline: 0; }
.color input[type="color"] { appearance: none; width: 14px; height: 14px; flex: none; border: 1px solid #35434a; border-radius: 2px; padding: 0; background: none; }
.color input::-webkit-color-swatch-wrapper { padding: 0; }
.color input::-webkit-color-swatch { border: 0; border-radius: 1px; }
.file { display: flex; align-items: center; height: 27px; border-radius: 3px; overflow: hidden; background: #2b383f; padding-right: 8px; color: #dfe5e7; }
.note { width: 27px; align-self: stretch; display: grid; place-items: center; background: #09161d; color: #fff; }
.name { flex: 1; padding-left: 8px; }
.file button { margin-left: 8px; color: #8d999f; }

.preview { padding: 0; display: flex; flex-direction: column; overflow: hidden; }
.stage { flex: 1; background: #181818; border-bottom: 1px solid #415058; }
.bar { display: flex; align-items: center; height: 47px; padding: 0 11px 0 10px; }
.bar .dim { margin: 0 9px 0 3px; }
.mute { margin-left: auto; margin-right: 16px; color: #fff; }
.btn { height: 27px; border-radius: 3px; background: #4f5e65; color: #fff; font-weight: 500; padding: 0 8px; }
.toast { position: absolute; top: 14px; right: 36px; width: 207px; height: 14px; padding: 4px 7px 0; overflow: hidden; border-radius: 2px; background: #86ffd2; color: #17513f; font-size: 9px; line-height: 12px; }

.fold { padding: 0 10px 0 21px; }
h2 { margin: 0; display: flex; align-items: center; height: 36px; font-size: 10px; font-weight: 500; color: #fff; }
h2 button { margin-right: 10px; }
.fields { padding: 9px 12px 11px 0; }
.fields .row { grid-template-columns: 142px 1fr; }
.info { margin-left: 3px; }
.badge { display: flex; align-items: center; gap: 4px; height: 15px; margin-left: 3px; padding: 0 3px; border-radius: 2px; background: #86ffd2; color: #10372f; font-weight: 400; }
.badge::before { content: ""; width: 4px; height: 4px; border-radius: 50%; background: currentColor; }
.badge.bad { background: #f1605f; color: #3a1d22; }
h2 input { appearance: none; margin-left: auto; width: 19px; height: 11px; border-radius: 6px; background: #909b9f; padding: 1px; display: flex; }
h2 input::before { content: ""; width: 9px; height: 9px; border-radius: 50%; background: #17242d; }
h2 input:checked { background: #fff; justify-content: flex-end; }
h2 input:checked::after { content: ""; order: -1; width: 5px; height: 3px; border: solid #17242d; border-width: 0 0 1px 1px; transform: rotate(-45deg); margin: 2px 1px 0 0; }

footer { height: 38px; flex: none; border-top: 1px solid #36454d; display: flex; align-items: center; justify-content: flex-end; padding-right: 17px; }
.save { background: #2b383f; color: #8d999f; padding: 0 7px; }
.vbar { width: 6px; background: #0f1a22; padding: 240px 1px 8px; display: flex; }
.vbar span { flex: 1; border: 1px solid #1d2d38; border-radius: 3px; }

/* taskbar */
.taskbar { position: relative; flex: none; height: 32px; background: #060606; display: flex; align-items: center; padding: 0 13px 0 248px; font-family: "Open Sans", "Noto Sans", sans-serif; color: #eee; }
.waves { position: absolute; width: 100%; height: 100%; left: 0; top: 0; }
.taskbar > :not(.waves) { position: relative; }
.start { margin-right: 9px; }
.find { width: 146px; height: 22px; border-radius: 11px; background: #2a2a2a; justify-content: flex-start; gap: 6px; padding-left: 7px; }
.apps { display: flex; width: 528px; margin-left: 2px; flex: none; }
.apps button { flex: 1; height: 32px; position: relative; }
.apps .open::after, .apps .current::after { content: ""; position: absolute; bottom: 4px; width: 4px; height: 1px; background: #9aa0a3; border-radius: 1px; }
.apps .current { background: linear-gradient(#1d1f20, #1d1f20) center / 25px 27px no-repeat; }
.apps .current::after { width: 10px; height: 2px; background: #60c6f4; bottom: 3px; }
.apps em { position: absolute; top: 5px; right: 4px; font-style: normal; font-size: 6px; line-height: 9px; min-width: 9px; height: 9px; border-radius: 5px; background: #dd4249; color: #fff; text-align: center; }
.apps em.dot { background: #f00; }
.voice { display: grid; width: 17px; font-size: 5px; line-height: 8px; text-align: center; }
.voice b:first-child { background: #d9373a; }
.voice b:last-child { background: #4a4f52; font-size: 4px; }
.epic { font-family: "Liberation Sans", sans-serif; font-size: 5px; font-weight: 700; line-height: 9px; border-bottom: 1px solid #999; }
.tray { display: flex; gap: 11px; margin: 0 18px 0 auto; }
.lang { margin-right: 17px; }
.taskbar > .s12 { margin-right: 5px; }
.clock { display: flex; flex-direction: column; align-items: flex-end; font-size: 8px; line-height: 11px; margin-left: 4px; }

.pointer { position: absolute; left: 495px; top: 465px; width: 10px; height: 15px; pointer-events: none; }
</style>
